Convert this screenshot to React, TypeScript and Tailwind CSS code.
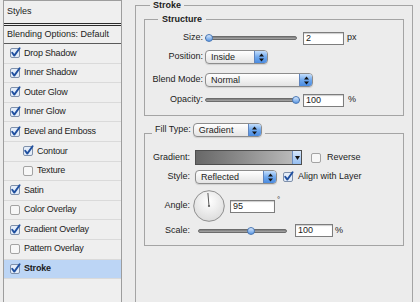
import React from "react";

interface StyleItem {
  name: string;
  on: boolean;
  indent?: boolean;
  selected?: boolean;
}

const styleItems: StyleItem[] = [
  { name: "Drop Shadow", on: true },
  { name: "Inner Shadow", on: true },
  { name: "Outer Glow", on: true },
  { name: "Inner Glow", on: true },
  { name: "Bevel and Emboss", on: true },
  { name: "Contour", on: true, indent: true },
  { name: "Texture", on: false, indent: true },
  { name: "Satin", on: true },
  { name: "Color Overlay", on: false },
  { name: "Gradient Overlay", on: true },
  { name: "Pattern Overlay", on: false },
  { name: "Stroke", on: true, selected: true },
];

const CheckBox: React.FC<{ on: boolean }> = ({ on }) => (
  <svg width="10" height="10" viewBox="0 0 10 10" className="shrink-0 overflow-visible">
    <rect
      x="0.5"
      y="0.5"
      width="9"
      height="9"
      rx="1.5"
      fill={on ? "#e4edf9" : "#f7f7f7"}
      stroke={on ? "#7f90aa" : "#a3a3a3"}
    />
    {on && (
      <path
        d="M2.2 4.8 L4.3 7.6 L9.6 0.2"
        fill="none"
        stroke="#1f4f9f"
        strokeWidth="1.9"
        strokeLinecap="round"
        strokeLinejoin="round"
      />
    )}
  </svg>
);

// Aqua style popup button
const Popup: React.FC<{ label: string; className: string }> = ({ label, className }) => (
  <div
    className={
      "flex h-[14px] shrink-0 overflow-hidden rounded-[4px] border border-[#8d8d8d] bg-gradient-to-b from-white to-[#e4e4e4] shadow-[0_1px_1px_rgba(0,0,0,0.12)] " +
      className
    }
  >
    <span className="flex flex-1 items-center pl-[5px] leading-none">{label}</span>
    <span className="flex w-[13px] items-center justify-center border-l border-[#5f84bd] bg-gradient-to-b from-[#c4defb] via-[#70a9ee] to-[#4a8be0]">
      <svg width="5" height="9" viewBox="0 0 5 9">
        <path d="M0 3.4 L2.5 0.6 L5 3.4 Z" fill="#111" />
        <path d="M0 5.6 L2.5 8.4 L5 5.6 Z" fill="#111" />
      </svg>
    </span>
  </div>
);

const Slider: React.FC<{ value: number; className: string }> = ({ value, className }) => (
  <div className={"relative flex h-[10px] shrink-0 items-center " + className}>
    <div className="h-[4px] w-full rounded-full border border-[#6c6c6c] bg-gradient-to-b from-[#7b7b7b] to-[#a9a9a9]" />
    <div
      className="absolute top-[1px] h-[8px] w-[8px] rounded-full border border-[#4a78b6] bg-gradient-to-b from-[#d7e8fc] to-[#5b98e3]"
      style={{ left: `calc(${value}% - ${value * 0.08}px)` }}
    />
  </div>
);

const NumField: React.FC<{ value: string; className: string }> = ({ value, className }) => (
  <div
    className={
      "flex h-[13px] shrink-0 items-center border border-[#7d7d7d] bg-white pl-[2px] leading-none shadow-[inset_0_1px_1px_rgba(0,0,0,0.2)] " +
      className
    }
  >
    {value}
  </div>
);

const AngleDial: React.FC = () => (
  <svg width="32" height="32" viewBox="0 0 32 32" className="shrink-0">
    <defs>
      <radialGradient id="dialFill" cx="50%" cy="35%" r="65%">
        <stop offset="0%" stopColor="#ffffff" />
        <stop offset="100%" stopColor="#dcdcdc" />
      </radialGradient>
    </defs>
    <circle cx="16" cy="16" r="15.3" fill="url(#dialFill)" stroke="#8f8f8f" />
    <line x1="16" y1="16" x2="14.9" y2="3" stroke="#5a5a5a" strokeWidth="1" />
    <circle cx="16" cy="16" r="1.1" fill="#5a5a5a" />
  </svg>
);

const StylesPanel: React.FC = () => (
  <div className="ml-[3px] flex h-full w-[119px] shrink-0 flex-col border-x border-t border-[#9d9d9d] bg-[#efefef]">
    <div className="flex h-[22px] items-center pl-[3px]">Styles</div>
    <div className="h-[3px] border-y border-[#2b2b2b]" />
    <div className="flex h-[18px] items-center border-b border-[#5a5a5a] pl-[3px]">
      Blending Options: Default
    </div>
    {styleItems.map((item) => (
      <div
        key={item.name}
        className={
          "flex h-[19.6px] items-center gap-[4px] border-b border-[#dadada] " +
          (item.indent ? "pl-[19px] " : "pl-[6px] ") +
          (item.selected ? "bg-[#bcd5f5] font-bold" : "")
        }
      >
        <CheckBox on={item.on} />
        <span className="tracking-[-0.2px]">{item.name}</span>
      </div>
    ))}
  </div>
);

const StrokeGroup: React.FC = () => (
  <fieldset className="ml-[13px] h-[330px] w-[278px] shrink-0 border border-b-0 border-[#a4a4a4]">
    <legend className="ml-[14px] px-[3px] font-bold leading-[10px]">Stroke</legend>
    <div className="pl-[8px]">
      {/* Structure */}
      <fieldset className="mt-[4px] w-[260px] border border-[#a4a4a4] pb-[8px]">
        <legend className="ml-[13px] px-[4px] font-bold leading-[10px]">Structure</legend>

        <div className="mt-[7px] flex h-[14px] items-center">
          <span className="w-[58px] text-right">Size:</span>
          <Slider value={0} className="ml-[2px] w-[92px]" />
          <NumField value="2" className="ml-[6px] w-[41px]" />
          <span className="ml-[3px]">px</span>
        </div>

        <div className="mt-[5px] flex h-[14px] items-center">
          <span className="w-[58px] text-right">Position:</span>
          <Popup label="Inside" className="ml-[2px] w-[63px]" />
        </div>

        <div className="mt-[9px] flex h-[14px] items-center">
          <span className="w-[58px] text-right">Blend Mode:</span>
          <Popup label="Normal" className="ml-[2px] w-[108px]" />
        </div>

        <div className="mt-[6px] flex h-[14px] items-center">
          <span className="w-[58px] text-right">Opacity:</span>
          <Slider value={100} className="ml-[2px] w-[95px]" />
          <NumField value="100" className="ml-[3px] w-[41px]" />
          <span className="ml-[4px]">%</span>
        </div>
      </fieldset>

      {/* Fill type */}
      <fieldset className="mt-[7px] w-[260px] border border-[#a4a4a4] pb-[8px]">
        <legend className="ml-[7px] px-[3px] pb-[6px]">
          <div className="flex h-[14px] items-center">
            <span>Fill Type:</span>
            <Popup label="Gradient" className="ml-[2px] w-[69px]" />
          </div>
        </legend>

        <div className="mt-[7px] flex h-[15px] items-center">
          <span className="w-[45px] text-right">Gradient:</span>
          <div className="ml-[5px] flex h-[15px] w-[107px] border border-[#4e4e4e]">
            <div className="flex-1 bg-gradient-to-r from-[#686868] via-[#8e8e8e] to-[#b9b9b9]" />
            <div className="flex w-[9px] items-center justify-center border-l border-[#6f8fbf] bg-gradient-to-b from-[#d6e6fa] to-[#94bdf0]">
              <svg width="5" height="4" viewBox="0 0 5 4">
                <path d="M0 0 L5 0 L2.5 4 Z" fill="#111" />
              </svg>
            </div>
          </div>
          <span className="ml-[9px] flex">
            <CheckBox on={false} />
          </span>
          <span className="ml-[6px]">Reverse</span>
        </div>

        <div className="mt-[5px] flex h-[14px] items-center">
          <span className="w-[45px] text-right">Style:</span>
          <Popup label="Reflected" className="ml-[5px] w-[82px]" />
          <span className="ml-[6px] flex">
            <CheckBox on={true} />
          </span>
          <span className="ml-[5px]">Align with Layer</span>
        </div>

        <div className="mt-[6px] flex h-[32px] items-center">
          <span className="w-[45px] text-right">Angle:</span>
          <span className="ml-[3px] flex">
            <AngleDial />
          </span>
          <NumField value="95" className="ml-[5px] w-[45px]" />
          <span className="ml-[2px] self-start mt-[6px] text-[8px] leading-none">°</span>
        </div>

        <div className="mt-[2px] flex h-[13px] items-center">
          <span className="w-[45px] text-right">Scale:</span>
          <Slider value={60} className="ml-[8px] w-[89px]" />
          <NumField value="100" className="ml-[8px] w-[38px]" />
          <span className="ml-[2px]">%</span>
        </div>
      </fieldset>
    </div>
  </fieldset>
);

export default function App() {
  return (
    <div className="flex h-[302px] w-[420px] overflow-hidden bg-[#ececec] font-['Liberation_Sans',Arial,sans-serif] text-[9px] text-[#1c1c1c]">
      <StylesPanel />
      <StrokeGroup />
    </div>
  );
}
